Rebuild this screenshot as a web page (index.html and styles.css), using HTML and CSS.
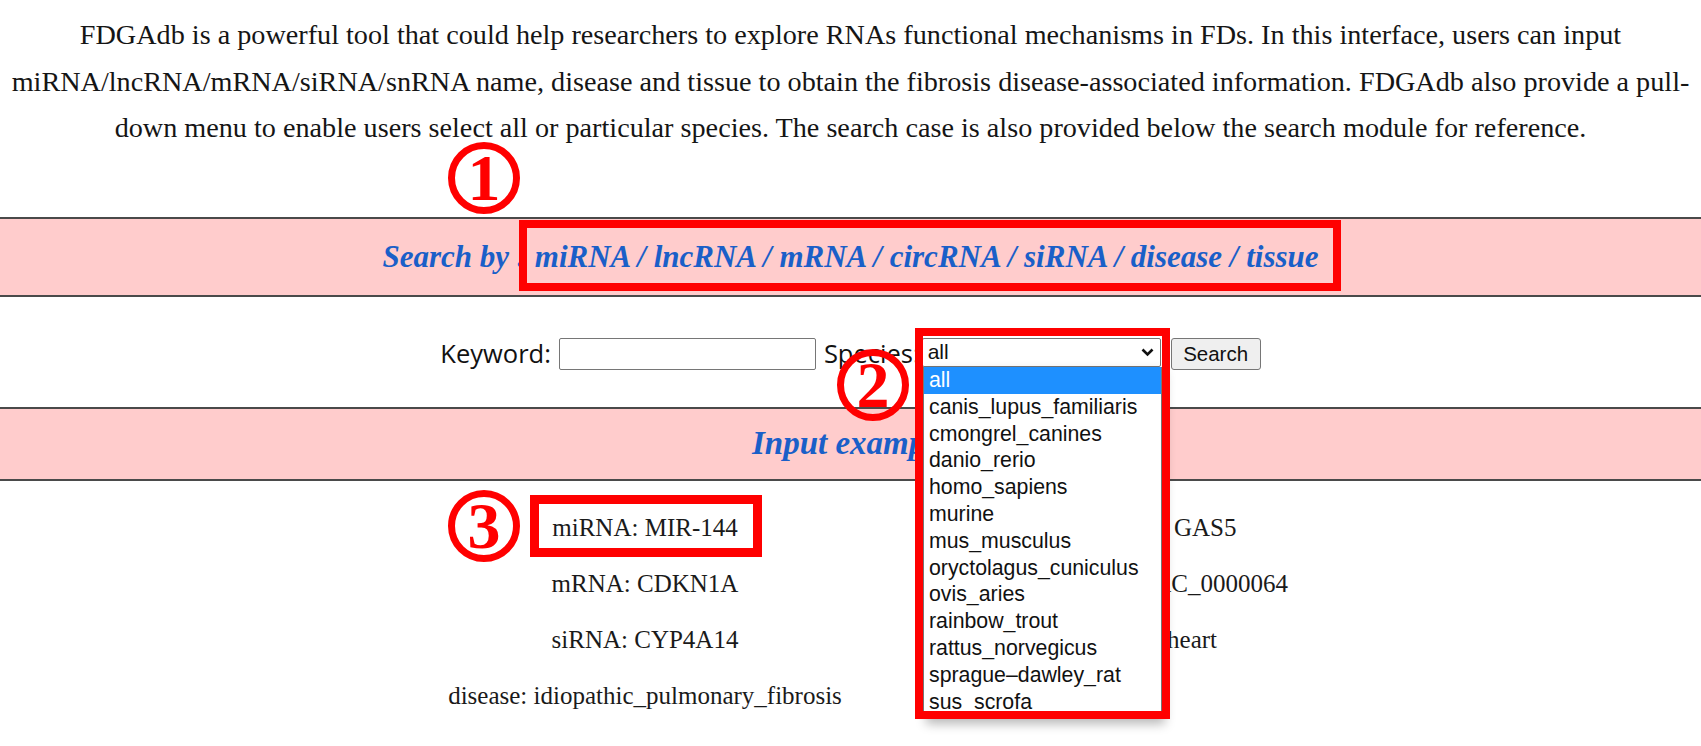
FILE: index.html
```html
<!DOCTYPE html>
<html lang="en">
<head>
<meta charset="utf-8">
<title>FDGAdb search</title>
<link rel="stylesheet" href="styles.css">
</head>
<body>
<div class="page">
  <p class="intro">FDGAdb is a powerful tool that could help researchers to explore RNAs functional mechanisms in FDs. In this interface, users can input miRNA/lncRNA/mRNA/siRNA/snRNA name, disease and tissue to obtain the fibrosis disease-associated information. FDGAdb also provide a pull-down menu to enable users select all or particular species. The search case is also provided below the search module for reference.</p>

  <div class="band band-search"><span class="band-title">Search by : miRNA / lncRNA / mRNA / circRNA / siRNA / disease / tissue</span></div>

  <form class="search-row">
    <label class="lbl lbl-kw" for="kw">Keyword:</label>
    <input class="kw" id="kw" type="text">
    <span class="lbl lbl-sp">Species:</span>
    <div class="select">
      <span>all</span>
      <svg class="chev" width="13" height="9" viewBox="0 0 13 9"><path d="M1.5 1.5 L6.5 6.5 L11.5 1.5" fill="none" stroke="#111" stroke-width="2.6"/></svg>
    </div>
    <button class="btn" type="button">Search</button>
  </form>

  <div class="band band-example"><span class="band-title band-title-ex">Input example</span></div>

  <div class="examples">
    <div class="ex">miRNA: MIR-144</div>
    <div class="ex">lncRNA: GAS5</div>
    <div class="ex">mRNA: CDKN1A</div>
    <div class="ex">circRNA: CIRC_0000064</div>
    <div class="ex">siRNA: CYP4A14</div>
    <div class="ex">tissue: heart</div>
    <div class="ex">disease: idiopathic_pulmonary_fibrosis</div>
  </div>

  <ul class="dropdown">
    <li class="opt opt-sel">all</li>
    <li class="opt">canis_lupus_familiaris</li>
    <li class="opt">cmongrel_canines</li>
    <li class="opt">danio_rerio</li>
    <li class="opt">homo_sapiens</li>
    <li class="opt">murine</li>
    <li class="opt">mus_musculus</li>
    <li class="opt">oryctolagus_cuniculus</li>
    <li class="opt">ovis_aries</li>
    <li class="opt">rainbow_trout</li>
    <li class="opt">rattus_norvegicus</li>
    <li class="opt">sprague&ndash;dawley_rat</li>
    <li class="opt">sus_scrofa</li>
  </ul>

  <div class="redbox redbox-1"></div>
  <div class="redbox redbox-2"></div>
  <div class="redbox redbox-3"></div>

  <div class="mark mark-1">1</div>
  <div class="mark mark-2">2</div>
  <div class="mark mark-3">3</div>
</div>
</body>
</html>
```

FILE: styles.css
```css
* { box-sizing: border-box; }

body {
  margin: 0;
  background: #fff;
  color: #151515;
  font-family: "Liberation Serif", "Times New Roman", serif;
}

.page {
  position: relative;
  width: 1701px;
  height: 746px;
  overflow: hidden;
}

.intro {
  margin: 0;
  padding: 12px 4px 0;
  font-size: 28.2px;
  line-height: 46.5px;
  text-align: center;
}

.band {
  display: flex;
  align-items: center;
  justify-content: center;
  background: #ffcccc;
  border-top: 2px solid #4a4a4a;
  border-bottom: 2px solid #4a4a4a;
}

.band-search {
  margin-top: 65px;
  height: 80px;
}

.band-example {
  height: 74px;
}

.band-title {
  font-weight: bold;
  font-style: italic;
  font-size: 31px;
  color: #1a5fc8;
}

.band-title-ex {
  font-size: 33px;
}

.search-row {
  display: flex;
  justify-content: center;
  align-items: flex-start;
  margin: 0;
  padding: 41px 0 37px;
  font-family: "Open Sans", "Liberation Sans", sans-serif;
  font-size: 25.5px;
  color: #111;
}

.lbl {
  line-height: 30px;
}

.kw {
  width: 257px;
  height: 32px;
  margin: 0 8px;
  border: 1px solid #767676;
  border-radius: 2px;
  background: #fff;
}

.select {
  display: flex;
  align-items: center;
  justify-content: space-between;
  width: 239px;
  height: 29px;
  margin-left: 2px;
  padding: 0 6px 0 5px;
  border: 1px solid #767676;
  border-radius: 2px;
  background: #fff;
  font-family: "Liberation Sans", Arial, sans-serif;
  font-size: 21px;
}

.chev { display: block; }

.btn {
  width: 90px;
  height: 32px;
  margin-left: 10px;
  padding: 0;
  border: 1px solid #767676;
  border-radius: 3px;
  background: #efefef;
  color: #111;
  font-family: "Liberation Sans", Arial, sans-serif;
  font-size: 20.5px;
}

.examples {
  display: grid;
  grid-template-columns: 410px 614px;
  padding: 19px 0 0 440px;
  font-size: 25px;
  line-height: 56px;
  text-align: center;
  color: #1a1a1a;
}

.ex { white-space: nowrap; }

/* open select popup */
.dropdown {
  position: absolute;
  left: 923px;
  top: 367px;
  width: 239px;
  height: 352px;
  margin: 0;
  padding: 0;
  list-style: none;
  overflow: hidden;
  background: #fff;
  border: 1px solid #767676;
  border-top: none;
  box-shadow: 3px 5px 10px rgba(0, 0, 0, 0.28);
  font-family: "Liberation Sans", Arial, sans-serif;
  font-size: 21.3px;
  color: #111;
}

.opt {
  height: 26.8px;
  line-height: 26.8px;
  padding-left: 5px;
  white-space: nowrap;
}

.opt-sel {
  background: #1e90ff;
  color: #fff;
}

/* annotations */
.redbox {
  position: absolute;
  border: 8px solid #ff0000;
}

.redbox-1 { left: 519px; top: 220px; width: 822px; height: 71px; }
.redbox-2 { left: 915px; top: 328px; width: 255px; height: 391px; }
.redbox-3 { left: 530px; top: 495px; width: 232px; height: 62px; border-width: 9px; }

.mark {
  position: absolute;
  width: 72px;
  height: 72px;
  display: flex;
  align-items: center;
  justify-content: center;
  border: 7px solid #ff0000;
  border-radius: 50%;
  color: #ff0000;
  font-family: "Liberation Serif", serif;
  font-weight: bold;
  font-size: 66px;
  line-height: 1;
  background: transparent;
}

.mark-1 { left: 448px; top: 142px; }
.mark-2 { left: 837px; top: 349px; }
.mark-3 { left: 448px; top: 490px; }
```
